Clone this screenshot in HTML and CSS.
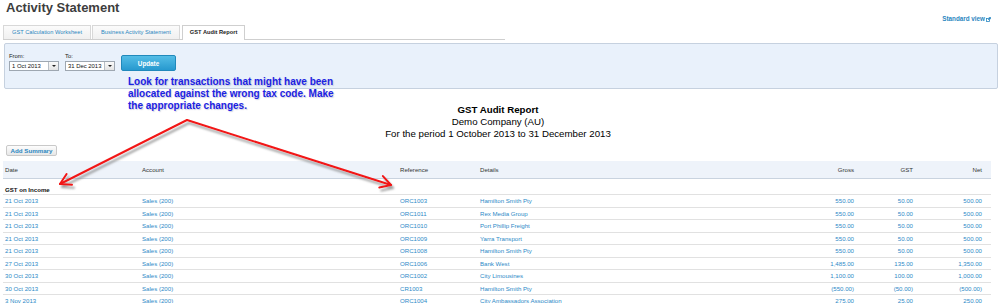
FILE: index.html
```html
<!DOCTYPE html>
<html lang="en">
<head>
    <meta charset="UTF-8">
    <title>Activity Statement - GST Audit Report</title>
    <link rel="stylesheet" href="styles.css">
</head>
<body>
<div class="page">
    <div class="top">
        <h1>Activity Statement</h1>
        <a class="std-view" href="#">Standard view <svg width="5" height="5" viewBox="0 0 5 5"><rect x="0.5" y="1.5" width="3" height="3" fill="none" stroke="#2a86c0" stroke-width="0.8"/><path d="M2 3 L4.5 0.5 M2.8 0.5 H4.5 V2.2" stroke="#2a86c0" stroke-width="0.8" fill="none"/></svg></a>
    </div>

    <ul class="tabs">
        <li>GST Calculation Worksheet</li>
        <li>Business Activity Statement</li>
        <li class="active">GST Audit Report</li>
    </ul>

    <div class="filter">
        <div class="field">
            <label>From:</label>
            <div class="dd"><span>1 Oct 2013</span><i></i></div>
        </div>
        <div class="field">
            <label>To:</label>
            <div class="dd"><span>31 Dec 2013</span><i></i></div>
        </div>
        <button class="btn-update">Update</button>
    </div>

    <div class="report-head">
        <div class="rh-title">GST Audit Report</div>
        <div>Demo Company (AU)</div>
        <div>For the period 1 October 2013 to 31 December 2013</div>
    </div>

    <button class="btn-summary">Add Summary</button>

    <table class="audit">
        <colgroup>
            <col style="width:137px"><col style="width:258px"><col style="width:80px"><col style="width:299px">
            <col style="width:77px"><col style="width:59px"><col style="width:78px">
        </colgroup>
        <thead>
            <tr><th>Date</th><th>Account</th><th>Reference</th><th>Details</th><th class="num">Gross</th><th class="num">GST</th><th class="num last">Net</th></tr>
        </thead>
        <tbody>
            <tr class="group"><td colspan="7">GST on Income</td></tr>
            <tr><td>21 Oct 2013</td><td>Sales (200)</td><td>ORC1003</td><td>Hamilton Smith Pty</td><td class="num">550.00</td><td class="num">50.00</td><td class="num last">500.00</td></tr>
            <tr><td>21 Oct 2013</td><td>Sales (200)</td><td>ORC1011</td><td>Rex Media Group</td><td class="num">550.00</td><td class="num">50.00</td><td class="num last">500.00</td></tr>
            <tr><td>21 Oct 2013</td><td>Sales (200)</td><td>ORC1010</td><td>Port Phillip Freight</td><td class="num">550.00</td><td class="num">50.00</td><td class="num last">500.00</td></tr>
            <tr><td>21 Oct 2013</td><td>Sales (200)</td><td>ORC1009</td><td>Yarra Transport</td><td class="num">550.00</td><td class="num">50.00</td><td class="num last">500.00</td></tr>
            <tr><td>21 Oct 2013</td><td>Sales (200)</td><td>ORC1008</td><td>Hamilton Smith Pty</td><td class="num">550.00</td><td class="num">50.00</td><td class="num last">500.00</td></tr>
            <tr><td>27 Oct 2013</td><td>Sales (200)</td><td>ORC1006</td><td>Bank West</td><td class="num">1,485.00</td><td class="num">135.00</td><td class="num last">1,350.00</td></tr>
            <tr><td>30 Oct 2013</td><td>Sales (200)</td><td>ORC1002</td><td>City Limousines</td><td class="num">1,100.00</td><td class="num">100.00</td><td class="num last">1,000.00</td></tr>
            <tr><td>30 Oct 2013</td><td>Sales (200)</td><td>CR1003</td><td>Hamilton Smith Pty</td><td class="num">(550.00)</td><td class="num">(50.00)</td><td class="num last">(500.00)</td></tr>
            <tr><td>3 Nov 2013</td><td>Sales (200)</td><td>ORC1004</td><td>City Ambassadors Association</td><td class="num">275.00</td><td class="num">25.00</td><td class="num last">250.00</td></tr>
        </tbody>
    </table>

    <p class="note">Look for transactions that might have been<br>allocated against the wrong tax code. Make<br>the appropriate changes.</p>

    <svg class="arrows" width="1000" height="303" viewBox="0 0 1000 303">
        <defs>
            <filter id="shadow" x="-10%" y="-10%" width="130%" height="140%">
                <feDropShadow dx="2" dy="3" stdDeviation="1.2" flood-color="#777" flood-opacity="0.7"/>
            </filter>
        </defs>
        <g fill="none" stroke="#f21414" stroke-width="2" stroke-linecap="round" stroke-linejoin="round" filter="url(#shadow)">
            <polyline points="187,120 60,184"/>
            <polyline points="66.6,174 60,184 72,184.7"/>
            <polyline points="187,120 391,185"/>
            <polyline points="382.9,176.1 391,185 379.3,187.6"/>
        </g>
    </svg>
</div>
</body>
</html>
```

FILE: styles.css
```css
html, body { overflow: hidden; }
body { margin: 0; font-family: "Liberation Sans", Arial, sans-serif; color: #333; background: #fff; }
.page { position: relative; width: 1000px; height: 303px; }

.top { display: flex; justify-content: space-between; align-items: flex-start; height: 22px; padding: 0 9px 0 6px; }
h1 { margin: 0; font-size: 13px; line-height: 16px; font-weight: bold; color: #3d3d3d; }
.std-view { margin-top: 15px; font-size: 6.3px; line-height: 8px; font-weight: bold; color: #2a86c0; text-decoration: none; display: flex; align-items: center; gap: 1px; }

.tabs { list-style: none; margin: 3px 0 0 3px; padding: 0; width: 502px; height: 14px; display: flex; gap: 1px; border-bottom: 1px solid #cfcfcf; }
.tabs li { height: 13px; line-height: 13px; padding: 0 8px; font-size: 5.7px; color: #2a86c0; border: 1px solid #d8d8d8; border-bottom: none; background: linear-gradient(#fbfbfb, #f0f0f0); }
.tabs li.active { margin-left: 1px; height: 14px; padding: 0 7px; background: #fff; color: #222; font-weight: bold; border-color: #cfcfcf; }

.filter { margin: 3px 2px 0 4px; height: 46px; box-sizing: border-box; padding: 8px 4px 0; display: flex; gap: 6px; align-items: flex-start; background: #e9f1fb; border: 1px solid #c6d1df; border-radius: 2px; }
.field label { display: block; font-size: 5.9px; line-height: 9px; color: #222; }
.dd { display: flex; width: 50px; height: 10px; box-sizing: border-box; background: #fff; border: 1px solid #9ea7b1; }
.dd span { flex: 1; font-size: 5.9px; line-height: 8px; padding-left: 2px; color: #111; }
.dd i { width: 9px; border-left: 1px solid #b7bec6; background: linear-gradient(#fafafa, #e4e4e4); position: relative; }
.dd i::after { content: ""; position: absolute; left: 2.5px; top: 3px; border-left: 2px solid transparent; border-right: 2px solid transparent; border-top: 2.5px solid #222; }
.btn-update { margin-top: 3px; width: 55px; height: 16px; padding: 0; border: 1px solid #2189bb; border-radius: 2px; background: linear-gradient(#54bde6, #2799cf); color: #fff; font: bold 6.3px "Liberation Sans", Arial, sans-serif; }

.report-head { margin-top: 15px; padding-right: 4px; text-align: center; font-size: 9.7px; line-height: 12px; color: #000; }
.rh-title { font-weight: bold; }

.btn-summary { display: block; margin: 5px 0 0 6px; width: 51px; height: 11px; padding: 0; border: 1px solid #c9c9c9; border-radius: 2px; background: linear-gradient(#fdfdfd, #e7e7e7); color: #2a86c0; font: bold 6.2px "Liberation Sans", Arial, sans-serif; }

.audit { margin: 5px 0 0 3px; width: 988px; table-layout: fixed; border-collapse: collapse; font-size: 6.1px; }
.audit th { height: 17px; padding: 0 0 0 2px; background: #eef3fa; border-bottom: 1px solid #c9d3df; text-align: left; font-weight: normal; color: #333; vertical-align: middle; }
.audit td { padding: 2px 0 1.5px 2px; line-height: 8px; color: #2d8ac7; border-bottom: 1px solid #e1e1e1; vertical-align: top; }
.audit .num { text-align: right; padding-left: 0; }
.audit .last { padding-right: 9px; }
.audit .group td { padding: 7px 0 0 2px; font-weight: bold; color: #111; }

.note { position: absolute; left: 128px; top: 76px; margin: 0; font-size: 10px; line-height: 12px; font-weight: bold; color: #1b22e2; text-shadow: 1px 1px 1px rgba(120, 120, 160, 0.35); }
.arrows { position: absolute; left: 0; top: 0; pointer-events: none; }
```
